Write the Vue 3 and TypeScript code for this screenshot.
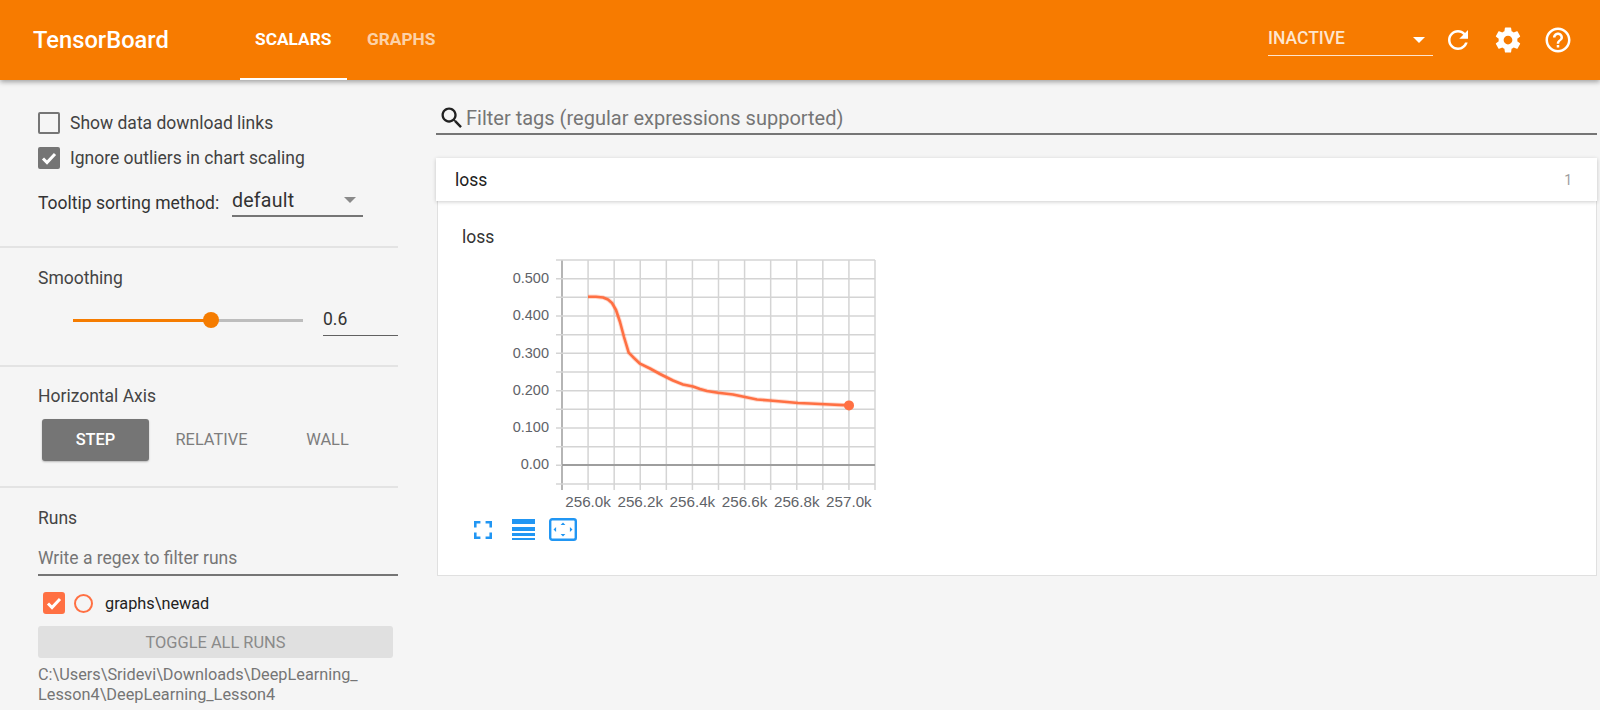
<script setup lang="ts">
import { computed, ref } from 'vue'

const tabs = ['SCALARS', 'GRAPHS']
const activeTab = ref('SCALARS')
const xModes = ['STEP', 'RELATIVE', 'WALL']
const xMode = ref('STEP')
const showLinks = ref(false)
const ignoreOutliers = ref(true)
const runChecked = ref(true)

// chart geometry, in svg pixels
const left = 122
const right = 435
const top = 5
const bottom = 229
const stepX = (right - left) / 12
const stepY = (bottom - top) / 6

const verticals = computed(() => Array.from({ length: 13 }, (_, i) => left + i * stepX))
const horizontals = computed(() => Array.from({ length: 13 }, (_, i) => top + (i * stepY) / 2))
const xLabels = ['256.0k', '256.2k', '256.4k', '256.6k', '256.8k', '257.0k']
const yLabels = [
  { text: '0.500', y: 24 },
  { text: '0.400', y: 61 },
  { text: '0.300', y: 98.5 },
  { text: '0.200', y: 136 },
  { text: '0.100', y: 173 },
  { text: '0.00', y: 210 },
]

const curve = [
  [148, 41.7], [156, 41.8], [163, 42.5], [168, 44.5], [172, 48], [176, 55], [180, 67], [184, 82], [188.7, 97.7],
  [194, 103], [200, 108.7], [210, 113.5], [220, 119], [227, 122.5], [233, 125.5], [243, 129.5], [253, 131.5],
  [260, 134], [267, 136], [278, 137.7], [293, 139.5], [305, 142], [317, 144.5], [330, 145.5], [347, 147],
  [358, 148], [370, 148.5], [385, 149.3], [409, 150.4],
]
const curvePath = curve.map(p => p.join(',')).join(' ')
</script>

<template>
  <div class="page">
    <header class="toolbar">
      <div class="brand">TensorBoard</div>
      <nav class="tabs">
        <div
          v-for="tab in tabs"
          :key="tab"
          class="tab"
          :class="{ active: activeTab === tab }"
          @click="activeTab = tab"
        >{{ tab }}</div>
      </nav>
      <div class="spacer"></div>
      <div class="plugin-select">
        <span>INACTIVE</span>
        <i class="caret white"></i>
      </div>
      <div class="tool-icons">
        <svg viewBox="0 0 24 24"><path d="M17.65 6.35C16.2 4.9 14.21 4 12 4c-4.42 0-7.99 3.58-7.99 8s3.57 8 7.99 8c3.73 0 6.84-2.55 7.73-6h-2.08c-.82 2.33-3.04 4-5.65 4-3.31 0-6-2.69-6-6s2.69-6 6-6c1.66 0 3.14.69 4.22 1.78L13 11h7V4l-2.35 2.35z"/></svg>
        <svg viewBox="0 0 24 24"><path d="M19.43 12.98c.04-.32.07-.64.07-.98s-.03-.66-.07-.98l2.11-1.65c.19-.15.24-.42.12-.64l-2-3.46c-.12-.22-.39-.3-.61-.22l-2.49 1c-.52-.4-1.08-.73-1.69-.98l-.38-2.65C14.46 2.18 14.25 2 14 2h-4c-.25 0-.46.18-.49.42l-.38 2.65c-.61.25-1.17.59-1.69.98l-2.49-1c-.23-.09-.49 0-.61.22l-2 3.46c-.13.22-.07.49.12.64l2.11 1.65c-.04.32-.07.65-.07.98s.03.66.07.98l-2.11 1.65c-.19.15-.24.42-.12.64l2 3.46c.12.22.39.3.61.22l2.49-1c.52.4 1.08.73 1.69.98l.38 2.65c.03.24.24.42.49.42h4c.25 0 .46-.18.49-.42l.38-2.65c.61-.25 1.17-.59 1.69-.98l2.49 1c.23.09.49 0 .61-.22l2-3.46c.12-.22.07-.49-.12-.64l-2.11-1.65zM12 15.5c-1.93 0-3.5-1.57-3.5-3.5s1.57-3.5 3.5-3.5 3.5 1.57 3.5 3.5-1.57 3.5-3.5 3.5z"/></svg>
        <svg viewBox="0 0 24 24"><path d="M11 18h2v-2h-2v2zm1-16C6.48 2 2 6.48 2 12s4.48 10 10 10 10-4.48 10-10S17.52 2 12 2zm0 18c-4.41 0-8-3.59-8-8s3.59-8 8-8 8 3.59 8 8-3.59 8-8 8zm0-14c-2.21 0-4 1.79-4 4h2c0-1.1.9-2 2-2s2 .9 2 2c0 2-3 1.75-3 5h2c0-2.25 3-2.5 3-5 0-2.21-1.79-4-4-4z"/></svg>
      </div>
    </header>

    <div class="body">
      <aside class="sidebar">
        <section class="settings">
          <div class="check-row" @click="showLinks = !showLinks">
            <span class="box" :class="{ on: showLinks }">
              <svg v-if="showLinks" viewBox="0 0 22 22"><path d="M5 11.5l4 4 8-8.5" /></svg>
            </span>
            <span>Show data download links</span>
          </div>
          <div class="check-row second" @click="ignoreOutliers = !ignoreOutliers">
            <span class="box" :class="{ on: ignoreOutliers }">
              <svg v-if="ignoreOutliers" viewBox="0 0 22 22"><path d="M5 11.5l4 4 8-8.5" /></svg>
            </span>
            <span>Ignore outliers in chart scaling</span>
          </div>
          <div class="sort-row">
            <span class="sort-label">Tooltip sorting method:</span>
            <div class="sort-select">
              <span>default</span>
              <i class="caret grey"></i>
            </div>
          </div>
        </section>

        <section class="smoothing">
          <div class="heading">Smoothing</div>
          <div class="slider-row">
            <div class="slider">
              <div class="slider-fill"></div>
              <div class="slider-thumb"></div>
            </div>
            <div class="slider-value">0.6</div>
          </div>
        </section>

        <section class="axis">
          <div class="heading">Horizontal Axis</div>
          <div class="axis-buttons">
            <div
              v-for="mode in xModes"
              :key="mode"
              class="axis-button"
              :class="{ selected: xMode === mode }"
              @click="xMode = mode"
            >{{ mode }}</div>
          </div>
        </section>

        <section class="runs">
          <div class="heading">Runs</div>
          <div class="runs-filter">Write a regex to filter runs</div>
          <div class="run-row" @click="runChecked = !runChecked">
            <span class="box run-box" :class="{ on: runChecked }">
              <svg v-if="runChecked" viewBox="0 0 22 22"><path d="M5 11.5l4 4 8-8.5" /></svg>
            </span>
            <span class="run-dot"></span>
            <span class="run-name">graphs\newad</span>
          </div>
          <div class="toggle-all">TOGGLE ALL RUNS</div>
          <div class="run-path">C:\Users\Sridevi\Downloads\DeepLearning_<br>Lesson4\DeepLearning_Lesson4</div>
        </section>
      </aside>

      <main class="main">
        <div class="tag-filter">
          <svg class="search" viewBox="0 0 24 24"><path d="M15.5 14h-.79l-.28-.27C15.41 12.59 16 11.11 16 9.5 16 5.91 13.09 3 9.5 3S3 5.91 3 9.5 5.91 16 9.5 16c1.61 0 3.09-.59 4.23-1.57l.27.28v.79l5 4.99L20.49 19l-4.99-5zm-6 0C7.01 14 5 11.99 5 9.5S7.01 5 9.5 5 14 7.01 14 9.5 11.99 14 9.5 14z"/></svg>
          <span>Filter tags (regular expressions supported)</span>
        </div>

        <div class="category">
          <div class="category-head">
            <span class="category-name">loss</span>
            <span class="category-count">1</span>
          </div>
          <div class="category-body">
            <div class="chart-title">loss</div>
            <svg class="chart" width="440" height="262" viewBox="0 0 440 262">
              <line
                v-for="(x, i) in verticals"
                :key="'v' + i"
                :x1="x" :x2="x" :y1="top" :y2="bottom + 6"
                :stroke="i === 0 ? '#b5b5b5' : '#d4d4d4'"
                :stroke-width="i === 0 ? 2 : 1.5"
              />
              <line
                v-for="(y, i) in horizontals"
                :key="'h' + i"
                :x1="left - 6" :x2="right" :y1="y" :y2="y"
                stroke="#d4d4d4"
                stroke-width="1.5"
              />
              <line :x1="left" :x2="right" y1="210" y2="210" stroke="#9e9e9e" stroke-width="2" />
              <text v-for="l in yLabels" :key="l.text" class="tick" x="109" :y="l.y + 4" text-anchor="end">{{ l.text }}</text>
              <text
                v-for="(l, i) in xLabels"
                :key="l"
                class="tick x-tick"
                :x="left + stepX * (1 + i * 2)"
                y="252"
                text-anchor="middle"
              >{{ l }}</text>
              <polyline :points="curvePath" fill="none" stroke="#ff7043" stroke-width="4.5" stroke-opacity="0.25" stroke-linejoin="round" />
              <polyline :points="curvePath" fill="none" stroke="#ff7043" stroke-width="2.6" stroke-linejoin="round" />
              <circle cx="409" cy="150.4" r="5" fill="#ff7043" />
            </svg>
            <div class="chart-actions">
              <svg class="fullscreen" viewBox="5 5 14 14"><path d="M7 14H5v5h5v-2H7v-3zm-2-4h2V7h3V5H5v5zm12 7h-3v2h5v-5h-2v3zM14 5v2h3v3h2V5h-5z"/></svg>
              <svg class="list" viewBox="0 0 23 21">
                <rect x="0" y="0" width="23" height="5" />
                <rect x="0" y="8" width="23" height="4" />
                <rect x="0" y="14" width="23" height="3" />
                <rect x="0" y="19" width="23" height="2" />
              </svg>
              <svg class="fit" viewBox="0 0 28 23">
                <rect x="1.2" y="1.2" width="25.6" height="20.6" rx="2" fill="none" stroke="#2196f3" stroke-width="2.4" />
                <path d="M14 4.5l-2.4 2.6h4.8zM14 18.5l-2.4-2.6h4.8zM4.5 11.5l2.6-2.4v4.8zM23.5 11.5l-2.6-2.4v4.8z" />
              </svg>
            </div>
          </div>
        </div>
      </main>
    </div>
  </div>
</template>

<style>
html, body {
  margin: 0;
  height: 100%;
  overflow: hidden;
  background: #f5f5f5;
}
</style>

<style scoped>
.page {
  height: 710px;
  overflow: hidden;
  display: flex;
  flex-direction: column;
  background: #f5f5f5;
  color: #424242;
  font-family: Roboto, "Liberation Sans", sans-serif;
  font-size: 17.5px;
}

.toolbar {
  flex: none;
  height: 80px;
  display: flex;
  align-items: stretch;
  background: #f77b00;
  color: #fff;
  box-shadow: 0 2px 5px rgba(0, 0, 0, 0.35);
  position: relative;
  z-index: 2;
}
.brand {
  width: 240px;
  padding-left: 33px;
  box-sizing: border-box;
  font-size: 23.7px;
  font-weight: 500;
  line-height: 80px;
}
.tabs {
  display: flex;
}
.tab {
  padding: 0 15px;
  min-width: 77px;
  font-size: 17.3px;
  font-weight: 700;
  line-height: 78px;
  color: rgba(255, 255, 255, 0.68);
  white-space: nowrap;
}
.tab + .tab {
  margin-left: 5px;
}
.tab.active {
  color: #fff;
  box-shadow: inset 0 -2px 0 #fff;
}
.spacer {
  flex: 1;
}
.plugin-select {
  width: 165px;
  height: 56px;
  padding-top: 28px;
  box-sizing: border-box;
  display: flex;
  justify-content: space-between;
  align-items: flex-start;
  font-size: 17.5px;
  font-weight: 500;
  line-height: 20px;
  color: rgba(255, 255, 255, 0.82);
  border-bottom: 1px solid rgba(255, 255, 255, 0.8);
}
.plugin-select .caret {
  margin: 9px 8px 0 0;
}
.caret {
  width: 0;
  height: 0;
  border-left: 6px solid transparent;
  border-right: 6px solid transparent;
  display: block;
}
.caret.white {
  border-top: 6px solid #fff;
}
.caret.grey {
  border-top: 6px solid #8a8a8a;
}
.tool-icons {
  display: flex;
  align-items: center;
  gap: 20px;
  padding: 0 27px 0 10px;
}
.tool-icons svg {
  width: 30px;
  height: 30px;
  fill: #fff;
}

.body {
  flex: 1;
  display: flex;
  min-height: 0;
}

.sidebar {
  flex: none;
  width: 398px;
  display: flex;
  flex-direction: column;
}
.sidebar section {
  box-sizing: border-box;
  padding-left: 38px;
  border-bottom: 2px solid #e3e3e3;
}
.heading {
  line-height: 20px;
  color: #444;
}

.settings {
  height: 168px;
  padding-top: 32px;
}
.check-row {
  display: flex;
  align-items: center;
  gap: 10px;
  height: 22px;
}
.check-row.second {
  margin-top: 13px;
}
.box {
  flex: none;
  width: 22px;
  height: 22px;
  box-sizing: border-box;
  border: 2px solid #757575;
  border-radius: 2px;
  display: block;
}
.box.on {
  background: #757575;
}
.box svg {
  display: block;
  width: 22px;
  height: 22px;
  margin: -2px;
  fill: none;
  stroke: #fff;
  stroke-width: 3;
}
.sort-row {
  display: flex;
  align-items: flex-end;
  margin-top: 16px;
}
.sort-label {
  width: 194px;
  line-height: 24px;
  margin-bottom: 2px;
  color: #333;
}
.sort-select {
  width: 131px;
  height: 32px;
  box-sizing: border-box;
  display: flex;
  justify-content: space-between;
  align-items: center;
  font-size: 19.6px;
  letter-spacing: 0.2px;
  color: #333;
  border-bottom: 2px solid #757575;
}
.sort-select .caret {
  margin-right: 7px;
}

.smoothing {
  height: 119px;
  padding-top: 20px;
}
.slider-row {
  display: flex;
  align-items: flex-start;
  margin-top: 20px;
}
.slider {
  position: relative;
  margin-left: 35px;
  margin-top: 11px;
  width: 230px;
  height: 3px;
  background: #bdbdbd;
}
.slider-fill {
  width: 138px;
  height: 100%;
  background: #f57c00;
}
.slider-thumb {
  position: absolute;
  left: 130px;
  top: -7px;
  width: 16px;
  height: 16px;
  border-radius: 50%;
  background: #f57c00;
}
.slider-value {
  margin-left: 20px;
  flex: 1;
  height: 27px;
  line-height: 22px;
  color: #333;
  border-bottom: 1px solid #616161;
}

.axis {
  height: 121px;
  padding-top: 19px;
}
.axis-buttons {
  display: flex;
  gap: 9px;
  margin: 13px 0 0 4px;
}
.axis-button {
  width: 107px;
  height: 42px;
  line-height: 42px;
  text-align: center;
  font-size: 16.4px;
  color: #7d7d7d;
  border-radius: 3px;
}
.axis-button.selected {
  background: #757575;
  color: #fff;
  font-weight: 500;
  box-shadow: 0 1px 2px rgba(0, 0, 0, 0.25);
}

.sidebar .runs {
  flex: 1;
  border-bottom: none;
  padding-top: 20px;
}
.runs-filter {
  margin-top: 19px;
  height: 22px;
  padding-bottom: 5px;
  line-height: 22px;
  color: #757575;
  border-bottom: 2px solid #757575;
}
.run-row {
  display: flex;
  align-items: center;
  margin: 16px 0 0 5px;
  height: 22px;
}
.box.run-box {
  border-color: #ff7043;
  border-radius: 3px;
}
.box.run-box.on {
  background: #ff7043;
}
.run-dot {
  flex: none;
  width: 15px;
  height: 15px;
  margin-left: 9px;
  border: 2px solid #ff7043;
  border-radius: 50%;
}
.run-name {
  margin-left: 12px;
  font-size: 16.3px;
  color: #222;
}
.toggle-all {
  margin-top: 12px;
  width: 355px;
  height: 32px;
  line-height: 34px;
  text-align: center;
  background: #e0e0e0;
  border-radius: 3px;
  font-size: 16.4px;
  color: #8a8a8a;
}
.run-path {
  margin-top: 7px;
  font-size: 16.3px;
  line-height: 20px;
  color: #757575;
  white-space: nowrap;
}

.main {
  flex: 1;
  min-width: 0;
  padding: 0 3px 0 38px;
}
.tag-filter {
  height: 55px;
  box-sizing: border-box;
  padding: 24px 0 2px 2px;
  display: flex;
  align-items: center;
  font-size: 20px;
  color: #757575;
  border-bottom: 2px solid #757575;
}
.search {
  width: 28px;
  height: 28px;
  fill: #212121;
  flex: none;
}

.category {
  margin-top: 23px;
}
.category-head {
  height: 43px;
  padding: 0 25px 0 19px;
  display: flex;
  align-items: center;
  justify-content: space-between;
  background: #fff;
  box-shadow: 0 1px 4px rgba(0, 0, 0, 0.2);
  position: relative;
}
.category-name {
  font-size: 17.5px;
  color: #212121;
}
.category-count {
  font-size: 14px;
  color: #9e9e9e;
}
.category-body {
  height: 375px;
  box-sizing: border-box;
  padding: 26px 0 0 24px;
  background: #fff;
  border: 1px solid #e0e0e0;
  border-top: none;
  margin-left: 1px;
}
.chart-title {
  font-size: 17.5px;
  line-height: 20px;
  color: #333;
}
.chart {
  display: block;
  margin: 8px 0 0 -22px;
}
.tick {
  font-family: "Liberation Sans", Arial, sans-serif;
  font-size: 14.5px;
  fill: #5f6368;
}
.x-tick {
  font-size: 15.2px;
}
.chart-actions {
  display: flex;
  align-items: center;
  margin-top: 1px;
  padding-left: 12px;
}
.chart-actions svg {
  display: block;
  fill: #2196f3;
}
.fullscreen {
  width: 18px;
  height: 18px;
}
.list {
  width: 23px;
  height: 21px;
  margin-left: 20px;
}
.fit {
  width: 28px;
  height: 23px;
  margin-left: 14px;
}
</style>
